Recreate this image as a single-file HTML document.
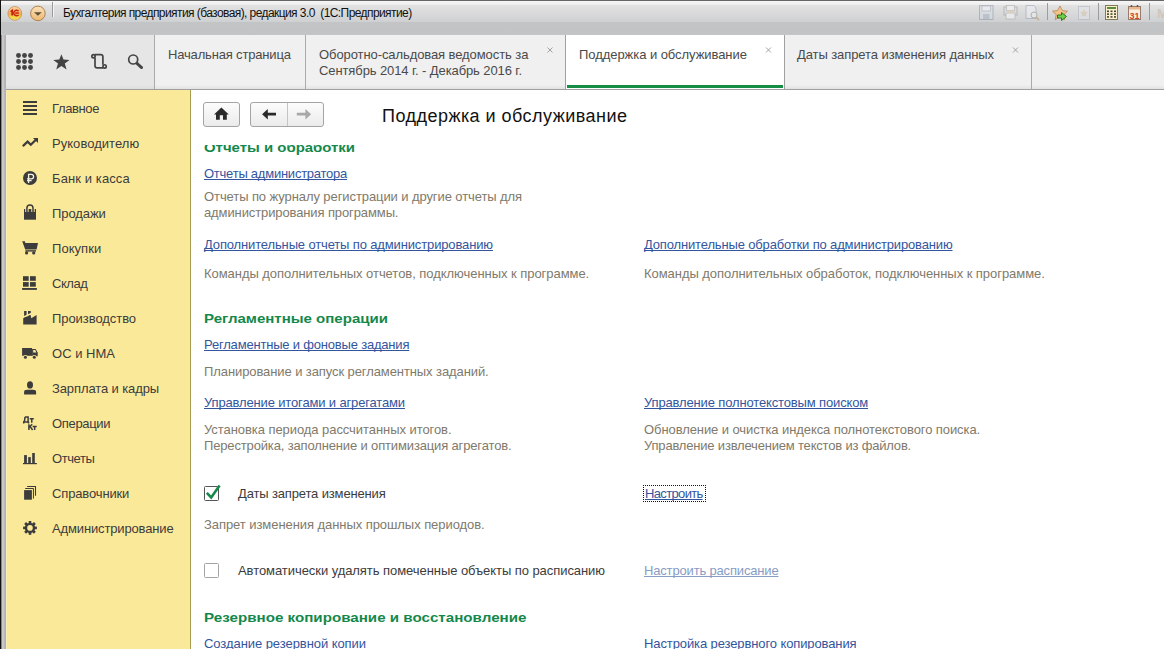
<!DOCTYPE html>
<html><head><meta charset="utf-8">
<style>
html,body{margin:0;padding:0;width:1164px;height:649px;overflow:hidden;}
body{position:relative;font-family:"Liberation Sans",sans-serif;background:#fff;}
.a{position:absolute;}
svg{position:absolute;overflow:visible;}
.t13{font-size:13px;line-height:16px;white-space:nowrap;}
.ttl{font-size:12px;line-height:14px;white-space:nowrap;color:#111;}
.ptl{font-size:18px;line-height:22px;white-space:nowrap;color:#111;}
.side{color:#3c3c3c;}
.tab{color:#4a4a4a;}
.lnk{color:#33559e;text-decoration:underline;text-decoration-skip-ink:none;}
.dis{color:#889cc4;}
.dsc{color:#807a6c;}
.hdr{color:#14884a;font-weight:bold;font-size:13.5px;line-height:16px;white-space:nowrap;transform-origin:0 0;}
</style></head><body>
<!-- window frame -->
<div class="a" style="left:0;top:0;width:1164px;height:35px;background:linear-gradient(#666 0px,#666 1px,#f6f6f6 1px,#ececec 5px,#e2e2e2 5px,#cfd0d2 22px,#c3c4c6 22px,#c2c3c5 34px,#c8c8c8 35px)"></div>
<div class="a" style="left:0;top:0;width:1px;height:649px;background:#111"></div>
<div class="a" style="left:1px;top:35px;width:5px;height:614px;background:linear-gradient(90deg,#5a5a5a 0,#c6cac4 25%,#cacec8 45%,#c0b8c0 60%,#b4acb4 100%)"></div>
<!-- title icons -->
<svg style="left:0;top:0" width="64" height="30">
 <defs>
  <linearGradient id="g1c" x1="0" y1="0" x2="0" y2="1"><stop offset="0" stop-color="#f6d9a8"/><stop offset="0.55" stop-color="#f3a655"/><stop offset="0.7" stop-color="#f2d23a"/><stop offset="1" stop-color="#f5e070"/></linearGradient>
  <linearGradient id="gdd" x1="0" y1="0" x2="0" y2="1"><stop offset="0" stop-color="#f8e2bc"/><stop offset="1" stop-color="#efb870"/></linearGradient>
 </defs>
 <circle cx="14.8" cy="13.4" r="6.9" fill="url(#g1c)" stroke="#c89060" stroke-width="0.8"/>
 <path d="M10.6,11.6 L12.2,10.4 L12.2,15.6" stroke="#c8260a" stroke-width="1.7" fill="none"/>
 <path d="M18.6,11.0 A3,2.6 0 1 0 18.6,15.0 M15.2,13.0 H18.8" stroke="#c8260a" stroke-width="1.5" fill="none"/>
 <circle cx="37.9" cy="13.4" r="7.3" fill="url(#gdd)" stroke="#b08050" stroke-width="1"/>
 <path d="M34,12.2 H41.8 L37.9,15.8 Z" fill="#5e5038"/>
 <rect x="52" y="2" width="1" height="15" fill="#9a9a9a"/>
 <rect x="53" y="2" width="1" height="15" fill="#f4f4f4"/>
</svg>
<!-- right toolbar icons -->
<svg style="left:975px;top:2px" width="189" height="22">
 <g opacity="0.55">
  <rect x="4.5" y="3.5" width="13.5" height="14" fill="#d8dde6" stroke="#8a97aa"/>
  <rect x="7" y="4" width="8.5" height="5" fill="#f2f4f8" stroke="#9aa4b4" stroke-width="0.8"/>
  <rect x="8" y="12" width="6.5" height="5" fill="#a8b2c0"/>
  <rect x="29" y="5" width="13" height="8" fill="#dedede" stroke="#9a9a9a"/>
  <rect x="31.5" y="3.5" width="8" height="5" fill="#f6f6f6" stroke="#a0a0a0" stroke-width="0.8"/>
  <rect x="31" y="11" width="9" height="6" fill="#f8f8f8" stroke="#a0a0a0" stroke-width="0.8"/>
  <rect x="32" y="8.5" width="7" height="2" fill="#e0c8a0"/>
  <path d="M51,3.5 H59 L61,6 V16.5 H51 Z" fill="#eef0f4" stroke="#97a3b5"/>
  <circle cx="59" cy="13" r="3" fill="#f0f0f0" stroke="#909090"/>
  <path d="M61,15 L64,18" stroke="#b89a70" stroke-width="2"/>
 </g>
 <rect x="72" y="1" width="1" height="17" fill="#9c9c9c"/>
 <path d="M85,4 L87.4,8.6 L92.5,9.2 L88.8,12.6 L89.8,17.6 L85,15 L80.2,17.6 L81.2,12.6 L77.5,9.2 L82.6,8.6 Z" fill="#f2c48a" stroke="#b07a48" stroke-width="0.7"/>
 <path d="M82.5,13 H86.5 V10.5 L91.5,14.5 L86.5,18.5 V16 H82.5 Z" fill="#6fd04a" stroke="#1f6a14" stroke-width="0.9"/>
 <g opacity="0.5">
  <rect x="103.5" y="4.5" width="11" height="13" fill="#e4e6ea" stroke="#a8b0bc"/>
  <path d="M109,7 L110.3,9.8 L113,10.1 L111,12 L111.6,14.8 L109,13.4 L106.4,14.8 L107,12 L105,10.1 L107.7,9.8 Z" fill="#d6c4a8"/>
 </g>
 <rect x="123" y="1" width="1" height="17" fill="#9c9c9c"/>
 <rect x="130.5" y="3.5" width="12" height="14" fill="#faf0d0" stroke="#7e7a5a"/>
 <rect x="132" y="5" width="9" height="2" fill="#5a8a3a"/>
 <g fill="#4a4630"><rect x="132" y="8.5" width="2" height="1.6"/><rect x="135.5" y="8.5" width="2" height="1.6"/><rect x="139" y="8.5" width="2" height="1.6"/><rect x="132" y="11.3" width="2" height="1.6"/><rect x="135.5" y="11.3" width="2" height="1.6"/><rect x="139" y="11.3" width="2" height="1.6"/><rect x="132" y="14.1" width="2" height="1.6"/><rect x="135.5" y="14.1" width="2" height="1.6"/><rect x="139" y="14.1" width="2" height="1.6"/></g>
 <rect x="153.5" y="4.5" width="12" height="13" fill="#fbeede" stroke="#9a7a6a"/>
 <rect x="154" y="5" width="11" height="2.5" fill="#e8b890"/>
 <circle cx="156.5" cy="4" r="0.9" fill="#6a4a3a"/><circle cx="162.5" cy="4" r="0.9" fill="#6a4a3a"/>
 <text x="159.5" y="16.6" font-family="Liberation Sans" font-size="9" font-weight="bold" fill="#d2452a" text-anchor="middle">31</text>
 <rect x="174" y="1" width="1" height="17" fill="#9c9c9c"/>
 <text x="182" y="16" font-family="Liberation Sans" font-size="13" font-weight="bold" fill="#cfc6bc">M</text>
</svg>

<!-- tab strip -->
<div class="a" style="left:6px;top:35px;width:1158px;height:54px;background:linear-gradient(#f0f0f0 0,#f0f0f0 50px,#e2e2e2 54px)"></div>
<div class="a" style="left:6px;top:35px;width:148px;height:54px;background:linear-gradient(#e6e6e6 0,#e6e6e6 50px,#dcdcdc 54px)"></div>
<div class="a" style="left:6px;top:89px;width:1158px;height:1px;background:#a0a0a0"></div>
<div class="a" style="left:154px;top:35px;width:1px;height:54px;background:#aaaaaa"></div>
<div class="a" style="left:305px;top:35px;width:1px;height:54px;background:#aaaaaa"></div>
<div class="a" style="left:565px;top:35px;width:1px;height:54px;background:#a0a0a0"></div>
<div class="a" style="left:566px;top:35px;width:218px;height:54px;background:#fff"></div>
<div class="a" style="left:567px;top:85px;width:216px;height:3px;background:#168c44"></div>
<div class="a" style="left:784px;top:35px;width:1px;height:54px;background:#a0a0a0"></div>
<div class="a" style="left:1031px;top:35px;width:1px;height:54px;background:#aaaaaa"></div>
<svg style="left:0;top:0" width="1164" height="89">
 <g stroke="#999" stroke-width="0.9" fill="none">
  <path d="M547.5,47.5 L552.5,52.5 M552.5,47.5 L547.5,52.5"/>
  <path d="M766,47.5 L771,52.5 M771,47.5 L766,52.5"/>
  <path d="M1013,47.5 L1018,52.5 M1018,47.5 L1013,52.5"/>
 </g>
 <g fill="#444">
  <circle cx="18.5" cy="55.5" r="2.45"/><circle cx="24.5" cy="55.5" r="2.45"/><circle cx="30.5" cy="55.5" r="2.45"/>
  <circle cx="18.5" cy="61.5" r="2.45"/><circle cx="24.5" cy="61.5" r="2.45"/><circle cx="30.5" cy="61.5" r="2.45"/>
  <circle cx="18.5" cy="67.5" r="2.45"/><circle cx="24.5" cy="67.5" r="2.45"/><circle cx="30.5" cy="67.5" r="2.45"/>
  <path d="M61.4,54.2 L63.5,59.6 L69.5,60 L64.8,63.6 L66.6,69.5 L61.4,66.1 L56.2,69.5 L58,63.6 L53.3,60 L59.3,59.6 Z"/>
 </g>
 <g stroke="#444" stroke-width="1.7" fill="none">
  <path d="M94.6,54.6 H100.7 Q102.9,54.6 102.9,56.8 V64.8"/>
  <path d="M95,58 V65.7 Q95,67.9 97.2,67.9 H103"/>
  <circle cx="93.5" cy="56.2" r="1.65"/>
  <circle cx="104.6" cy="66.4" r="1.65"/>
  <circle cx="133.2" cy="59.5" r="4.5"/>
 </g>
 <path d="M137.2,63.6 L141.6,67.6" stroke="#444" stroke-width="2.8" stroke-linecap="round"/>
</svg>

<!-- sidebar -->
<div class="a" style="left:6px;top:90px;width:184px;height:559px;background:#fbe99a"></div>
<div class="a" style="left:190px;top:90px;width:1px;height:559px;background:#a89d54"></div>
<div class="a" style="left:6px;top:90px;width:1px;height:559px;background:#f6eeb4"></div>
<svg style="left:18px;top:96px" width="24" height="460">
 <g fill="#3c3c3c">
  <!-- 1 main -->
  <rect x="5" y="5" width="14" height="2"/><rect x="5" y="9" width="14" height="2"/><rect x="5" y="13" width="14" height="2"/><rect x="5" y="17" width="14" height="2"/>
 </g>
 <g transform="translate(0,35)">
  <path d="M5.4,14.6 L9.6,10.6 L12.8,13.8 L17.4,9.2" stroke="#3c3c3c" stroke-width="2.2" fill="none" stroke-linecap="round" stroke-linejoin="miter"/>
  <path d="M15,7 H20 V12 Z" fill="#3c3c3c"/>
 </g>
 <g transform="translate(0,70)">
  <circle cx="12" cy="12" r="7" fill="#3c3c3c"/>
  <path d="M10.6,17 V8.3 H13.4 Q15.6,8.3 15.6,10.6 Q15.6,12.9 13.4,12.9 H9 M9,14.6 H13.6" stroke="#f6f2e2" stroke-width="1.3" fill="none"/>
 </g>
 <g transform="translate(0,105)">
  <rect x="6" y="8" width="12" height="10.7" fill="#3c3c3c"/>
  <path d="M8.9,11 V7 A3.05,3.05 0 0 1 15,7 V11" stroke="#fbe99a" stroke-width="3.4" fill="none"/>
  <path d="M8.9,11 V7 A3.05,3.05 0 0 1 15,7 V11" stroke="#3c3c3c" stroke-width="1.5" fill="none"/>
 </g>
 <g transform="translate(0,140)" fill="#3c3c3c">
  <path d="M4.2,5.2 H6.9 L7.3,7 H20 L18.6,13.4 H7.2 Z"/>
  <rect x="7.4" y="14.2" width="10.6" height="1.4"/>
  <circle cx="8.6" cy="16.9" r="1.6"/><circle cx="15.7" cy="16.9" r="1.6"/>
 </g>
 <g transform="translate(0,175)" fill="#3c3c3c">
  <rect x="5" y="5.2" width="5.7" height="4.6"/><rect x="12" y="5.2" width="5.8" height="4.6"/>
  <rect x="5" y="11.1" width="5.7" height="4.6"/><rect x="12" y="11.1" width="5.8" height="4.6"/>
  <rect x="4.1" y="17" width="14.8" height="1.9"/>
 </g>
 <g transform="translate(0,210)">
  <rect x="6.1" y="5" width="2.5" height="7" fill="#3c3c3c"/><rect x="10" y="5" width="2.8" height="5" fill="#3c3c3c"/>
  <path d="M5.2,11.2 L12.6,7.9 L13.3,11.2 L18.6,7.9" stroke="#fbe99a" stroke-width="1.6" fill="none"/>
  <path d="M5.2,12.2 L12.6,8.9 L13.3,12.2 L18.6,8.9 V18.6 H5.2 Z" fill="#3c3c3c"/>
 </g>
 <g transform="translate(0,245)">
  <rect x="4.1" y="7" width="10" height="7.8" fill="#3c3c3c"/>
  <path d="M14.1,8.1 H17.6 L19.7,11.4 V15.2 H14.1 Z" fill="#3c3c3c"/>
  <path d="M15.2,9 H17.2 L18.4,11.4 H15.2 Z" fill="#fbe99a"/>
  <circle cx="7.4" cy="16.3" r="2.3" fill="#fbe99a"/><circle cx="16.3" cy="16.3" r="2.3" fill="#fbe99a"/>
  <circle cx="7.4" cy="16.3" r="1.5" fill="#3c3c3c"/><circle cx="16.3" cy="16.3" r="1.5" fill="#3c3c3c"/>
 </g>
 <g transform="translate(0,280)" fill="#3c3c3c">
  <ellipse cx="12" cy="8.9" rx="3" ry="3.7"/>
  <path d="M6.1,18.6 V16.2 Q6.1,13.8 9,13.8 H15.1 Q18.1,13.8 18.1,16.2 V18.6 Z"/>
 </g>
 <g transform="translate(0,315)" stroke="#3c3c3c" stroke-width="1.5" fill="none">
  <path d="M6.9,5.9 H10.1 V11 M6.9,5.9 Q6.9,10 5.8,11 M5,11 H11.2 M5.7,11 V12.4 M10.5,11 V12.4"/>
  <path d="M11.7,7.7 H15.8 M13.75,7.7 V11.8"/>
  <path d="M10.9,13.3 V19 M11.2,16.2 L14.2,13.3 M12.2,15.6 L14.6,19"/>
  <path d="M14.6,15.4 H18.7 M16.65,15.4 V19"/>
 </g>
 <g transform="translate(0,350)" fill="#3c3c3c">
  <rect x="6.1" y="9.1" width="2.8" height="8.1"/><rect x="10.2" y="11.1" width="2.6" height="6.1"/><rect x="14.2" y="7" width="2.6" height="10.2"/>
  <rect x="5" y="17" width="13.9" height="1.2"/>
 </g>
 <g transform="translate(0,385)">
  <rect x="6.1" y="9.1" width="7.8" height="9.6" fill="#3c3c3c"/>
  <path d="M7.2,7.5 H15.45 V17.6" stroke="#3c3c3c" stroke-width="1" fill="none"/>
  <path d="M9.1,5.5 H17.5 V14.8" stroke="#3c3c3c" stroke-width="1.1" fill="none"/>
 </g>
 <g transform="translate(0,420)">
  <g fill="#3c3c3c" transform="translate(12,11.9)">
   <rect x="-1.3" y="-6.9" width="2.6" height="13.8"/>
   <rect x="-1.3" y="-6.9" width="2.6" height="13.8" transform="rotate(45)"/>
   <rect x="-1.3" y="-6.9" width="2.6" height="13.8" transform="rotate(90)"/>
   <rect x="-1.3" y="-6.9" width="2.6" height="13.8" transform="rotate(135)"/>
   <circle r="5.2"/>
  </g>
  <circle cx="12" cy="11.9" r="2.8" fill="#fbe99a"/>
 </g>
</svg>

<!-- content header -->
<div class="a" style="left:203px;top:102px;width:35px;height:23px;border:1px solid #a4a4a4;border-radius:3px;background:linear-gradient(#fcfcfc,#ebebeb)"></div>
<div class="a" style="left:250px;top:102px;width:72px;height:23px;border:1px solid #a4a4a4;border-radius:3px;background:linear-gradient(#fcfcfc,#ebebeb)"></div>
<div class="a" style="left:287px;top:103px;width:1px;height:23px;background:#c4c4c4"></div>
<svg style="left:0;top:0" width="340" height="130">
 <path d="M221.4,107.6 L228.8,114.4 H226.8 V119.8 H223 V115.2 H219.8 V119.8 H216 V114.4 H214 Z" fill="#2a2a2a"/>
 <path d="M262.1,114.2 L267.8,109.1 V112.8 H276 V115.6 H267.8 V119.6 Z" fill="#2a2a2a"/>
 <path d="M311.1,114.2 L305.4,109.1 V112.8 H296.8 V115.6 H305.4 V119.6 Z" fill="#a8a8a8"/>
</svg>

<!-- checkboxes -->
<div class="a" style="left:204px;top:486px;width:15px;height:15px;box-sizing:border-box;border:1.6px solid #555;border-radius:1.5px"></div>
<svg style="left:0;top:0" width="230" height="500">
 <path d="M206.8,492.8 L211.2,497.4 L219.6,485.6" stroke="#17894a" stroke-width="2.6" fill="none" stroke-linejoin="miter"/>
</svg>
<div class="a" style="left:204px;top:563px;width:15px;height:15px;box-sizing:border-box;border:1.5px solid #a4a4a4;border-radius:1.5px"></div>
<!-- focus dotted border -->
<div class="a" style="left:643px;top:485px;width:61px;height:15px;border:1px dotted #111"></div>

<div class="a ttl" id="title" style="left:63px;top:6px;letter-spacing:-0.580px;">Бухгалтерия предприятия (базовая), редакция 3.0&nbsp; (1С:Предприятие)</div>
<div class="a t13 tab" id="tab1" style="left:168px;top:47px;letter-spacing:-0.166px;">Начальная страница</div>
<div class="a t13 tab" id="tab2a" style="left:319px;top:47px;letter-spacing:-0.085px;">Оборотно-сальдовая ведомость за</div>
<div class="a t13 tab" id="tab2b" style="left:319px;top:63px;letter-spacing:-0.100px;">Сентябрь 2014 г. - Декабрь 2016 г.</div>
<div class="a t13 tab" id="tab3" style="left:579px;top:47px;letter-spacing:-0.055px;">Поддержка и обслуживание</div>
<div class="a t13 tab" id="tab4" style="left:797px;top:47px;letter-spacing:-0.085px;">Даты запрета изменения данных</div>
<div class="a t13 side" id="side0" style="left:52px;top:101px;letter-spacing:-0.369px;">Главное</div>
<div class="a t13 side" id="side1" style="left:52px;top:136px;letter-spacing:0.040px;">Руководителю</div>
<div class="a t13 side" id="side2" style="left:52px;top:171px;letter-spacing:0.101px;">Банк и касса</div>
<div class="a t13 side" id="side3" style="left:52px;top:206px;letter-spacing:-0.083px;">Продажи</div>
<div class="a t13 side" id="side4" style="left:52px;top:241px;letter-spacing:0.051px;">Покупки</div>
<div class="a t13 side" id="side5" style="left:52px;top:276px;letter-spacing:-0.450px;">Склад</div>
<div class="a t13 side" id="side6" style="left:52px;top:311px;letter-spacing:-0.061px;">Производство</div>
<div class="a t13 side" id="side7" style="left:52px;top:346px;letter-spacing:0.017px;">ОС и НМА</div>
<div class="a t13 side" id="side8" style="left:52px;top:381px;letter-spacing:-0.108px;">Зарплата и кадры</div>
<div class="a t13 side" id="side9" style="left:52px;top:416px;letter-spacing:-0.328px;">Операции</div>
<div class="a t13 side" id="side10" style="left:52px;top:451px;letter-spacing:-0.440px;">Отчеты</div>
<div class="a t13 side" id="side11" style="left:52px;top:486px;letter-spacing:-0.140px;">Справочники</div>
<div class="a t13 side" id="side12" style="left:52px;top:521px;letter-spacing:-0.143px;">Администрирование</div>
<div class="a ptl" id="ptitle" style="left:382px;top:105px;letter-spacing:0.466px;">Поддержка и обслуживание</div>
<div class="a hdr" id="h1" style="left:204px;top:140px;transform:scaleX(1.1066);">Отчеты и обработки</div>
<div class="a t13 lnk" id="l1" style="left:204px;top:166px;letter-spacing:-0.240px;">Отчеты администратора</div>
<div class="a t13 dsc" id="d1a" style="left:204px;top:189px;letter-spacing:-0.089px;">Отчеты по журналу регистрации и другие отчеты для</div>
<div class="a t13 dsc" id="d1b" style="left:204px;top:205px;letter-spacing:-0.111px;">администрирования программы.</div>
<div class="a t13 lnk" id="l2L" style="left:204px;top:237px;letter-spacing:-0.141px;">Дополнительные отчеты по администрированию</div>
<div class="a t13 lnk" id="l2R" style="left:644px;top:237px;letter-spacing:-0.155px;">Дополнительные обработки по администрированию</div>
<div class="a t13 dsc" id="d2L" style="left:204px;top:266px;letter-spacing:-0.045px;">Команды дополнительных отчетов, подключенных к программе.</div>
<div class="a t13 dsc" id="d2R" style="left:644px;top:266px;letter-spacing:-0.047px;">Команды дополнительных обработок, подключенных к программе.</div>
<div class="a hdr" id="h2" style="left:204px;top:311px;transform:scaleX(1.1128);">Регламентные операции</div>
<div class="a t13 lnk" id="l3" style="left:204px;top:337px;letter-spacing:-0.193px;">Регламентные и фоновые задания</div>
<div class="a t13 dsc" id="d3" style="left:204px;top:364px;letter-spacing:-0.092px;">Планирование и запуск регламентных заданий.</div>
<div class="a t13 lnk" id="l4L" style="left:204px;top:395px;letter-spacing:-0.150px;">Управление итогами и агрегатами</div>
<div class="a t13 lnk" id="l4R" style="left:644px;top:395px;letter-spacing:-0.144px;">Управление полнотекстовым поиском</div>
<div class="a t13 dsc" id="d4La" style="left:204px;top:422px;letter-spacing:-0.063px;">Установка периода рассчитанных итогов.</div>
<div class="a t13 dsc" id="d4Lb" style="left:204px;top:438px;letter-spacing:-0.149px;">Перестройка, заполнение и оптимизация агрегатов.</div>
<div class="a t13 dsc" id="d4Ra" style="left:644px;top:422px;letter-spacing:-0.084px;">Обновление и очистка индекса полнотекстового поиска.</div>
<div class="a t13 dsc" id="d4Rb" style="left:644px;top:438px;letter-spacing:-0.188px;">Управление извлечением текстов из файлов.</div>
<div class="a t13 side" id="cb1" style="left:238px;top:486px;letter-spacing:-0.146px;">Даты запрета изменения</div>
<div class="a t13 lnk" id="set1" style="left:645px;top:486px;letter-spacing:-0.650px;">Настроить</div>
<div class="a t13 dsc" id="d5" style="left:204px;top:517px;letter-spacing:-0.065px;">Запрет изменения данных прошлых периодов.</div>
<div class="a t13 side" id="cb2" style="left:238px;top:563px;letter-spacing:-0.061px;">Автоматически удалять помеченные объекты по расписанию</div>
<div class="a t13 lnk dis" id="set2" style="left:644px;top:563px;letter-spacing:-0.165px;">Настроить расписание</div>
<div class="a hdr" id="h3" style="left:204px;top:610px;transform:scaleX(1.1224);">Резервное копирование и восстановление</div>
<div class="a t13 lnk" id="l6L" style="left:204px;top:636px;letter-spacing:-0.063px;">Создание резервной копии</div>
<div class="a t13 lnk" id="l6R" style="left:644px;top:636px;letter-spacing:-0.108px;">Настройка резервного копирования</div>
<div class="a" style="left:191px;top:134px;width:973px;height:11px;background:#fff"></div>
</body></html>
